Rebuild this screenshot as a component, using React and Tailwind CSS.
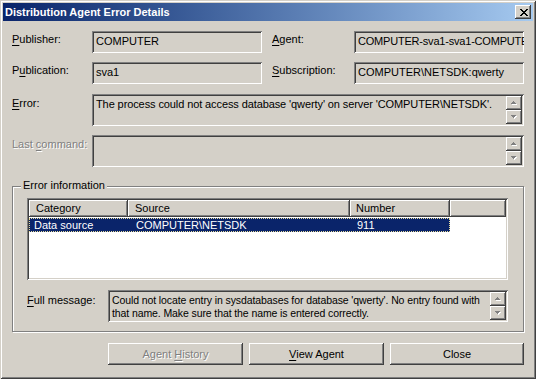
import React from "react";

// classic win2000 bevels
const sunken =
  "shadow-[inset_1px_1px_0_#808080,inset_-1px_-1px_0_#ffffff,inset_2px_2px_0_#404040,inset_-2px_-2px_0_#d4d0c8]";
const raised =
  "shadow-[inset_-1px_-1px_0_#404040,inset_1px_1px_0_#ffffff,inset_-2px_-2px_0_#808080,inset_2px_2px_0_#d4d0c8]";
const header =
  "shadow-[inset_-1px_-1px_0_#404040,inset_1px_1px_0_#ffffff,inset_-2px_-2px_0_#808080]";
const grayed = "text-[#808080] [text-shadow:1px_1px_0_#ffffff]";

const Key = ({ children }) => (
  <span className="underline underline-offset-[2px] decoration-1">{children}</span>
);

const Arrow = ({ up }) => {
  const rows = up ? [[2, 1], [1, 3], [0, 5]] : [[0, 5], [1, 3], [2, 1]];
  return (
    <svg width="7" height="5" viewBox="0 0 7 5" shapeRendering="crispEdges">
      {rows.map(([x, w], i) => (
        <rect key={"w" + i} x={x + 1} y={i + 1} width={w} height="1" fill="#ffffff" />
      ))}
      {rows.map(([x, w], i) => (
        <rect key={"g" + i} x={x} y={i} width={w} height="1" fill="#808080" />
      ))}
    </svg>
  );
};

const ScrollButtons = () => (
  <div className="flex flex-col shrink-0">
    <div className={`w-[16px] h-[14px] bg-[#d4d0c8] flex items-center justify-center ${raised}`}>
      <Arrow up />
    </div>
    <div className={`w-[16px] h-[14px] bg-[#d4d0c8] flex items-center justify-center ${raised}`}>
      <Arrow />
    </div>
  </div>
);

const Field = ({ label, value, labelW }) => (
  <div className="flex h-[22px]">
    <div className={`${labelW} pt-[2px]`}>{label}</div>
    <div className={`w-[170px] h-[22px] pl-[4px] pt-[4px] whitespace-nowrap overflow-hidden ${sunken}`}>
      {value}
    </div>
  </div>
);

const MemoBox = ({ text, className = "", textClass = "" }) => (
  <div className={`h-[32px] flex justify-between p-[2px] ${sunken} ${className}`}>
    <div className={`pl-[2px] pt-[2px] overflow-hidden whitespace-nowrap ${textClass}`}>{text}</div>
    <ScrollButtons />
  </div>
);

const XGlyph = () => {
  const rows = [
    [[0, 2], [6, 2]],
    [[1, 2], [5, 2]],
    [[2, 4]],
    [[3, 2]],
    [[2, 4]],
    [[1, 2], [5, 2]],
    [[0, 2], [6, 2]],
  ];
  return (
    <svg width="8" height="7" viewBox="0 0 8 7" shapeRendering="crispEdges">
      {rows.map((r, y) =>
        r.map(([x, w], j) => <rect key={y + "-" + j} x={x} y={y} width={w} height="1" fill="#000" />)
      )}
    </svg>
  );
};

export default function App() {
  return (
    <div
      className={`w-[536px] h-[379px] bg-[#d4d0c8] p-[3px] text-black font-['Liberation_Sans',Arial,sans-serif] text-[11px] leading-[13px] shadow-[inset_1px_1px_0_#d4d0c8,inset_-1px_-1px_0_#404040,inset_2px_2px_0_#ffffff,inset_-2px_-2px_0_#808080]`}
    >
      {/* title bar */}
      <div className="h-[18px] flex items-center justify-between bg-gradient-to-r from-[#0a246a] to-[#a6caf0] pl-[2px] pr-[2px]">
        <span className="text-white font-bold">Distribution Agent Error Details</span>
        <div className={`w-[16px] h-[14px] bg-[#d4d0c8] flex items-center justify-center pl-[1px] ${raised}`}>
          <XGlyph />
        </div>
      </div>

      {/* body */}
      <div className="px-[9px] pt-[10px]">
        <div className="flex gap-[10px]">
          <Field label={<><Key>P</Key>ublisher:</>} value="COMPUTER" labelW="w-[80px]" />
          <Field
            label={<><Key>A</Key>gent:</>}
            value={<span className="tracking-[-0.2px]">COMPUTER-sva1-sva1-COMPUTER</span>}
            labelW="w-[82px]"
          />
        </div>
        <div className="flex gap-[10px] mt-[9px]">
          <Field label={<>P<Key>u</Key>blication:</>} value="sva1" labelW="w-[80px]" />
          <Field label={<><Key>S</Key>ubscription:</>} value="COMPUTER\NETSDK:qwerty" labelW="w-[82px]" />
        </div>

        <div className="flex mt-[10px]">
          <div className="w-[80px] pt-[3px]"><Key>E</Key>rror:</div>
          <MemoBox
            className="w-[432px]"
            textClass="tracking-[-0.1px]"
            text="The process could not access database 'qwerty' on server 'COMPUTER\NETSDK'."
          />
        </div>
        <div className="flex mt-[9px]">
          <div className={`w-[80px] pt-[3px] ${grayed}`}>Last <Key>c</Key>ommand:</div>
          <MemoBox className="w-[432px]" text="" />
        </div>

        {/* group box */}
        <div className="relative mt-[19px] border border-[#808080] shadow-[inset_1px_1px_0_#ffffff,1px_1px_0_#ffffff] pl-[14px] pt-[11px] pb-[9px]">
          <span className="absolute left-[8px] -top-[8px] px-[2px] bg-[#d4d0c8]">Error information</span>

          <div className={`w-[481px] h-[82px] bg-white p-[2px] ${sunken}`}>
            <div className="flex h-[17px] bg-[#d4d0c8]">
              <div className={`w-[99px] pl-[7px] pt-[2px] ${header}`}>Category</div>
              <div className={`w-[222px] pl-[7px] pt-[2px] ${header}`}>Source</div>
              <div className={`w-[100px] pl-[6px] pt-[2px] ${header}`}>Number</div>
              <div className={`w-[56px] ${header}`}></div>
            </div>
            <div className="flex w-[421px] h-[14px] mt-[1px] bg-[#0a246a] text-white border border-dotted border-[#e8dc9c]">
              <div className="w-[99px] pl-[4px]">Data source</div>
              <div className="w-[222px] pl-[7px]">COMPUTER\NETSDK</div>
              <div className="w-[98px] pl-[6px]">911</div>
            </div>
          </div>

          <div className="flex mt-[10px]">
            <div className="w-[81px] pt-[4px]"><Key>F</Key>ull message:</div>
            <MemoBox
              className="w-[400px]"
              textClass="text-[10.5px] tracking-[-0.1px]"
              text={
                <>
                  Could not locate entry in sysdatabases for database 'qwerty'. No entry found with
                  <br />
                  that name. Make sure that the name is entered correctly.
                </>
              }
            />
          </div>
        </div>

        {/* buttons */}
        <div className="flex justify-end gap-[6px] mt-[11px]">
          <div className={`w-[135px] h-[22px] flex items-center justify-center ${raised} ${grayed}`}>
            <span>Agent <Key>H</Key>istory</span>
          </div>
          <div className={`w-[135px] h-[22px] flex items-center justify-center ${raised}`}>
            <span><Key>V</Key>iew Agent</span>
          </div>
          <div className={`w-[134px] h-[22px] flex items-center justify-center ${raised}`}>
            <span>Close</span>
          </div>
        </div>
      </div>
    </div>
  );
}
